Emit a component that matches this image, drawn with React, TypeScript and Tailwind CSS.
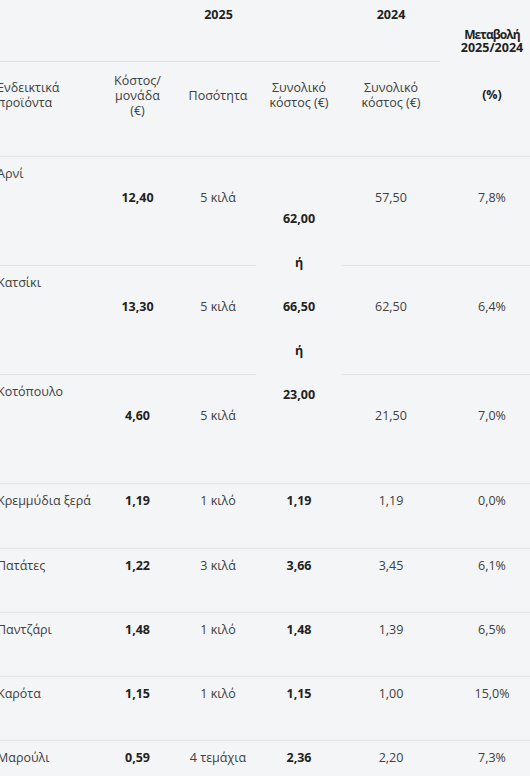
import { Fragment } from "react";

const line = "border-b border-[#dfe3e5]";

type Row = {
  name: string;
  cost: string;
  qty: string;
  total?: string;
  prev: string;
  pct: string;
};

const meat: Row[] = [
  { name: "Αρνί", cost: "12,40", qty: "5 κιλά", prev: "57,50", pct: "7,8%" },
  { name: "Κατσίκι", cost: "13,30", qty: "5 κιλά", prev: "62,50", pct: "6,4%" },
  { name: "Κοτόπουλο", cost: "4,60", qty: "5 κιλά", prev: "21,50", pct: "7,0%" },
];

const veg: Row[] = [
  { name: "Κρεμμύδια ξερά", cost: "1,19", qty: "1 κιλό", total: "1,19", prev: "1,19", pct: "0,0%" },
  { name: "Πατάτες", cost: "1,22", qty: "3 κιλά", total: "3,66", prev: "3,45", pct: "6,1%" },
  { name: "Παντζάρι", cost: "1,48", qty: "1 κιλό", total: "1,48", prev: "1,39", pct: "6,5%" },
  { name: "Καρότα", cost: "1,15", qty: "1 κιλό", total: "1,15", prev: "1,00", pct: "15,0%" },
  { name: "Μαρούλι", cost: "0,59", qty: "4 τεμάχια", total: "2,36", prev: "2,20", pct: "7,3%" },
];

function HeadCell({ children, left }: { children: React.ReactNode; left?: boolean }) {
  return (
    <div
      className={`h-[95px] pb-[28px] flex items-center leading-[15px] ${line} ${
        left ? "justify-start pl-[1px]" : "justify-center text-center"
      }`}
    >
      <div>{children}</div>
    </div>
  );
}

export default function App() {
  return (
    <div className="w-[530px] h-[776px] overflow-hidden bg-[#f4f5f6]">
      <div className="ml-[-4px] w-[548px] grid grid-cols-[99px_85px_76px_86px_98px_104px] text-[12.5px] leading-[18px] text-[#404040] font-['Open_Sans',sans-serif]">
        {/* header, first row */}
        <div className={`h-[62px] ${line}`} />
        <div className={`col-span-3 h-[62px] pt-[6px] text-center font-bold text-[#222] ${line}`}>2025</div>
        <div className={`h-[62px] pt-[6px] text-center font-bold text-[#222] ${line}`}>2024</div>
        <div className={`row-span-2 h-[157px] pt-[28px] text-center font-bold text-[#222] ${line}`}>
          <div className="leading-[13px]">
            <div className="text-[12px] tracking-[-0.9px]">Μεταβολή</div>
            <div className="text-[12.5px]">2025/2024</div>
          </div>
          <div className="mt-[32px]">(%)</div>
        </div>

        {/* header, second row */}
        <HeadCell left>
          Ενδεικτικά
          <br />
          προϊόντα
        </HeadCell>
        <HeadCell>
          Κόστος/
          <br />
          μονάδα
          <br />
          (€)
        </HeadCell>
        <HeadCell>Ποσότητα</HeadCell>
        <HeadCell>
          Συνολικό
          <br />
          κόστος (€)
        </HeadCell>
        <HeadCell>
          Συνολικό
          <br />
          κόστος (€)
        </HeadCell>

        {/* meat: one shared total column */}
        {meat.map((r, i) => (
          <Fragment key={r.name}>
            <div className={`h-[109px] pt-[8px] pl-[1px] ${line}`}>{r.name}</div>
            <div className={`h-[109px] pt-[32px] text-center font-bold text-[#222] ${line}`}>{r.cost}</div>
            <div className={`h-[109px] pt-[32px] text-center ${line}`}>{r.qty}</div>
            {i === 0 && (
              <div className={`row-span-3 h-[327px] pt-[53px] text-center font-bold text-[#222] ${line}`}>
                <div className="h-[44px]">62,00</div>
                <div className="h-[44px]">ή</div>
                <div className="h-[44px]">66,50</div>
                <div className="h-[44px]">ή</div>
                <div className="h-[44px]">23,00</div>
              </div>
            )}
            <div className={`h-[109px] pt-[32px] text-center ${line}`}>{r.prev}</div>
            <div className={`h-[109px] pt-[32px] text-center ${line}`}>{r.pct}</div>
          </Fragment>
        ))}

        {veg.map((r, i) => (
          <Fragment key={r.name}>
            <div className={`${i === 0 ? "h-[65px]" : "h-[64px]"} pt-[8px] pl-[1px] whitespace-nowrap ${line}`}>
              {r.name}
            </div>
            <div className={`pt-[8px] text-center font-bold text-[#222] ${line}`}>{r.cost}</div>
            <div className={`pt-[8px] text-center ${line}`}>{r.qty}</div>
            <div className={`pt-[8px] text-center font-bold text-[#222] ${line}`}>{r.total}</div>
            <div className={`pt-[8px] text-center ${line}`}>{r.prev}</div>
            <div className={`pt-[8px] text-center ${line}`}>{r.pct}</div>
          </Fragment>
        ))}
      </div>
    </div>
  );
}
